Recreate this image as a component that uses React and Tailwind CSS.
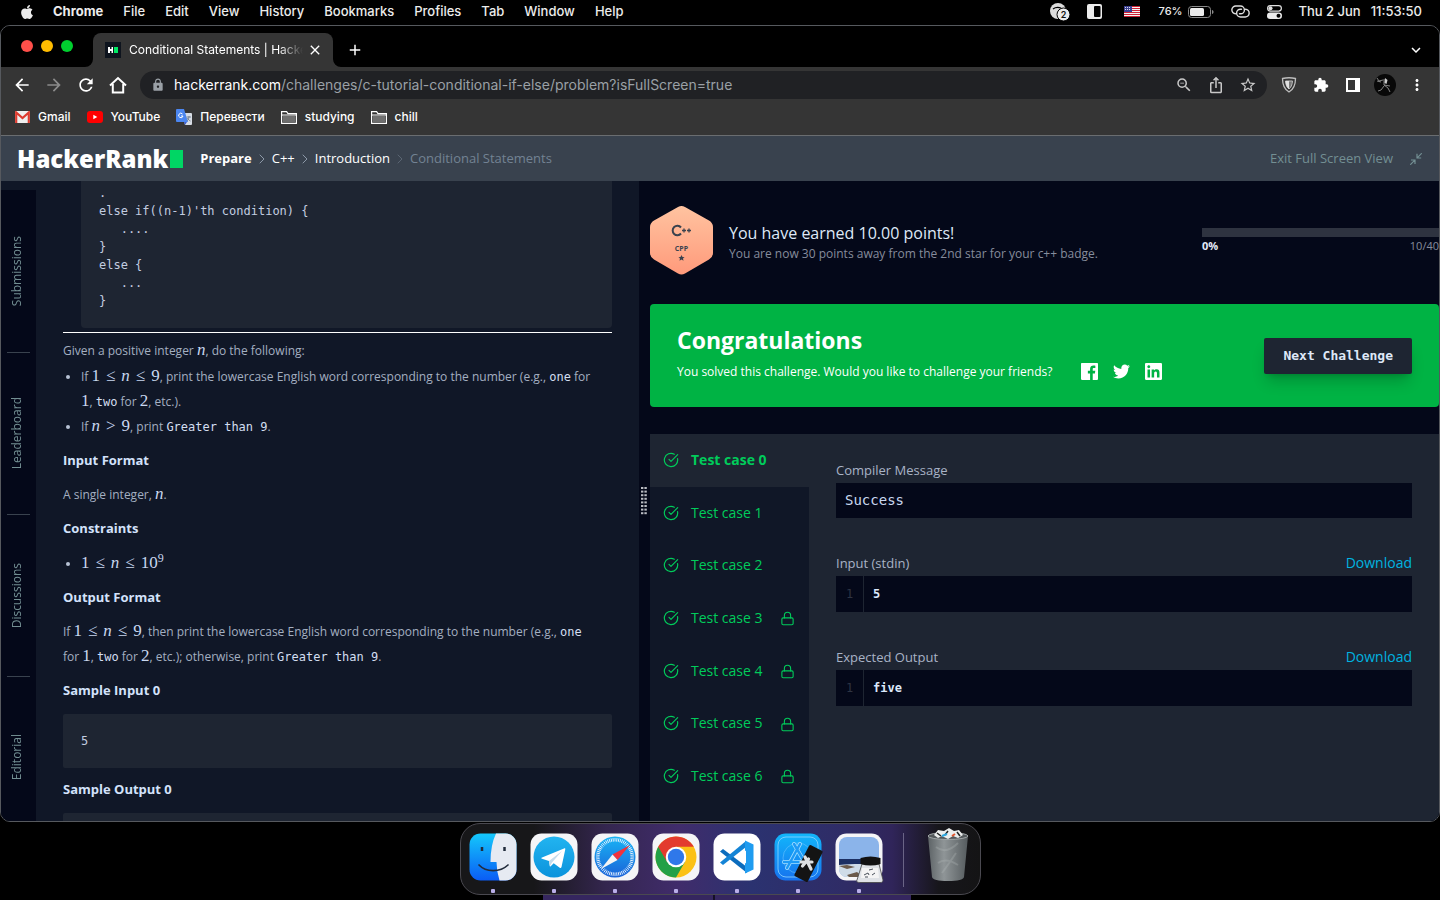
import React from "react";
import { FaApple, FaTwitter } from "react-icons/fa";
import {
  MdArrowBack, MdArrowForward, MdRefresh, MdLock, MdZoomOut, MdIosShare,
  MdStarBorder, MdExtension, MdMoreVert, MdExpandMore, MdAdd, MdClose,
} from "react-icons/md";
import { CircleCheckBig, Lock, ChevronRight } from "lucide-react";

const UI = "font-['Inter',sans-serif]";
const MONO = "font-['DejaVu_Sans_Mono',monospace]";
const MATH = "font-['Liberation_Serif',serif] text-[17px] leading-none text-[#c9d8f0]";

/* ---------- menu bar ---------- */

function MenuBar() {
  const items = ["File", "Edit", "View", "History", "Bookmarks", "Profiles", "Tab", "Window", "Help"];
  return (
    <header className={`${UI} flex h-[25px] shrink-0 items-center justify-between pr-[18px] pb-0.5 pl-[19px] text-[13px] font-medium text-[#ececec]`}>
      <nav className="flex items-center gap-5">
        <FaApple className="size-4" />
        <button className="-ml-0.5 font-bold">Chrome</button>
        {items.map((i) => <button key={i}>{i}</button>)}
      </nav>
      <div className="flex items-center">
        <svg className="mr-[17px] h-[18px] w-5" viewBox="0 0 20 18">
          <circle cx="8" cy="8" r="8" fill="#dcdcdc" />
          <path d="M3 6c2-1.500 5-2 8-1" stroke="#000" strokeWidth="1.200" fill="none" />
          <circle cx="13.500" cy="11.500" r="6.500" fill="#ececec" stroke="#000" />
          <text x="13.500" y="15" fontSize="9" textAnchor="middle" fill="#111" fontFamily="Inter" fontWeight="600">2</text>
        </svg>
        <svg className="mr-[22px] size-[15px]" viewBox="0 0 15 15">
          <rect width="15" height="15" rx="2" fill="#ececec" /><rect x="7" y="2" width="6.500" height="11" rx="1" fill="#000" />
        </svg>
        <svg className="mr-[19px] h-[11px] w-4" viewBox="0 0 16 11">
          <rect width="16" height="11" fill="#f4f4f4" />
          {[0, 2, 4, 6, 8, 10].map((y) => <rect key={y} y={y} width="16" height="1" fill="#d01f33" />)}
          <rect width="8" height="6" fill="#3b3f8f" />
          <path d="M1 1.500h6M1 3.500h6" stroke="#d6d8ee" strokeDasharray="1 1" />
        </svg>
        <span className="mr-[5px] text-[11px]">76%</span>
        <svg className="mr-[17px] h-3 w-[26px]" viewBox="0 0 26 12">
          <rect x=".5" y=".5" width="22" height="11" rx="3" fill="none" stroke="#8a8a8a" />
          <rect x="2" y="2" width="14" height="8" rx="1.500" fill="#ececec" />
          <path d="M24 4c2 .6 2 3.400 0 4z" fill="#8a8a8a" />
        </svg>
        <svg className="mr-[17px] h-[13px] w-[19px]" viewBox="0 0 19 13" fill="none" stroke="#dedede" strokeWidth="1.400" strokeLinecap="round">
          <path d="M4.500 8.800A3.900 3.900 0 0 1 5 1h4.500a3.900 3.900 0 0 1 0 7.800H8.500" />
          <path d="M14.500 4.200a3.900 3.900 0 0 1-.5 7.800H9.500a3.900 3.900 0 0 1 0-7.800h1" />
        </svg>
        <svg className="mr-[17px] h-[14px] w-[15px]" viewBox="0 0 15 14">
          <rect x=".6" y=".6" width="13.800" height="5.500" rx="2.750" fill="none" stroke="#dedede" strokeWidth="1.200" />
          <circle cx="3.500" cy="3.300" r="2" fill="#dedede" />
          <rect y="7.500" width="15" height="6.500" rx="3.200" fill="#ececec" /><circle cx="11.500" cy="10.750" r="2" fill="#000" />
        </svg>
        <span className="mr-2.5">Thu 2 Jun</span>
        <span>11:53:50</span>
      </div>
    </header>
  );
}

/* ---------- browser chrome ---------- */

function TabStrip() {
  return (
    <div className="flex h-[41px] shrink-0 items-end bg-black pr-[14px] pl-5 text-white">
      <div className="mr-[20px] mb-[15px] flex gap-2">
        <span className="size-3 rounded-full bg-[#ff4f4a]" />
        <span className="size-3 rounded-full bg-[#ffbc00]" />
        <span className="size-3 rounded-full bg-[#00d02f]" />
      </div>
      <div className="relative flex h-[34px] w-60 items-center rounded-t-lg bg-[#353535] pr-2.5 pl-3">
        <svg className="absolute bottom-0 -left-2 size-2" viewBox="0 0 8 8"><path d="M8 0v8H0a8 8 0 0 0 8-8" fill="#353535" /></svg>
        <svg className="absolute -right-2 bottom-0 size-2" viewBox="0 0 8 8"><path d="M0 0v8h8a8 8 0 0 1-8-8" fill="#353535" /></svg>
        <svg className="mr-2 size-4 shrink-0" viewBox="0 0 16 16">
          <rect width="16" height="16" fill="#0e141e" />
          <path d="M3 5h2v2h1.500V5H8v6H6.500V9H5v2H3z" fill="#fff" /><rect x="9" y="5" width="4" height="6" fill="#00ea64" />
        </svg>
        <span className={`${UI} min-w-0 flex-1 overflow-hidden text-xs whitespace-nowrap [mask-image:linear-gradient(to_right,#000_86%,transparent)]`}>
          Conditional Statements | HackerRank
        </span>
        <button aria-label="Close tab" className="ml-1"><MdClose className="size-4" /></button>
      </div>
      <button aria-label="New tab" className="mb-2 ml-[13px]"><MdAdd className="size-[18px]" /></button>
      <button aria-label="Search tabs" className="mb-2 ml-auto"><MdExpandMore className="size-[18px]" /></button>
    </div>
  );
}

function Toolbar() {
  return (
    <div className="flex h-9 shrink-0 items-center bg-[#353535] pr-3.5 pl-[11px] text-white">
      <button aria-label="Back" className="mr-3"><MdArrowBack className="size-5" /></button>
      <button aria-label="Forward" className="mr-3 text-[#8a8a8a]"><MdArrowForward className="size-5" /></button>
      <button aria-label="Reload" className="mr-3"><MdRefresh className="size-5" /></button>
      <button aria-label="Home" className="mr-3">
        <svg className="size-5" viewBox="0 0 20 20" fill="none" stroke="currentColor" strokeWidth="2"><path d="M2 10.500L10 3l8 7.500M4.800 9v8.500h10.400V9" /></svg>
      </button>
      <div className={`${UI} flex h-7 flex-1 items-center rounded-full bg-[#202124] pr-2.5 pl-[11px] text-sm`}>
        <MdLock className="mr-[9px] size-[14px] text-[#9aa0a6]" />
        <span className="flex-1 text-[#9aa0a6]"><span className="text-white">hackerrank.com</span>/challenges/c-tutorial-conditional-if-else/problem?isFullScreen=true</span>
        <span className="flex gap-3.5 text-[#c8c8c8]">
          <MdZoomOut className="size-[18px]" /><MdIosShare className="size-[18px]" /><MdStarBorder className="size-[18px]" />
        </span>
      </div>
      <div className="ml-3.5 flex items-center gap-4">
        <svg className="size-4" viewBox="0 0 15 16">
          <path d="M1 1.500C5 .600 10 .600 14 1.500c0 6-2 11-6.500 13.500C3 12.500 1 7.500 1 1.500z" fill="#353535" stroke="#bdbdbd" strokeWidth="1.300" />
          <path d="M4 4h7c-.3 4-1.500 6.500-3.500 8C5.500 10.500 4.200 8 4 4z" fill="#777" stroke="#bdbdbd" />
          <path d="M7.500 4v8C5.500 10.500 4.200 8 4 4z" fill="#e0e0e0" />
        </svg>
        <MdExtension className="size-4" />
        <svg className="size-4" viewBox="0 0 16 16"><path d="M1 1h14v14H1zM3 3v10h7V3z" fillRule="evenodd" fill="#fff" /></svg>
        <svg className="-mx-[3px] size-[22px]" viewBox="0 0 22 22">
          <circle cx="11" cy="11" r="11" fill="#080808" />
          <path d="M3 4l2 3 4-1M10 5v6l4 3 2 4M10 11l6 1M10 12l-3 4-3 1M3 7l4 1" stroke="#909090" strokeWidth=".9" fill="none" />
          <path d="M11 4l2.500 2-1 4-2-1z" fill="#ccc" />
        </svg>
        <MdMoreVert className="-mx-px size-[18px]" />
      </div>
    </div>
  );
}

function Folder() {
  return (
    <svg className="h-[13px] w-4" viewBox="0 0 16 13">
      <path d="M.600 12.400V.600h5l1.400 2h8.400v9.800z" fill="none" stroke="#fff" strokeWidth="1.200" />
      <path d="M2 5h12v6.500H2z" fill="#6f6f6f" /><path d="M.600 4h14.800" stroke="#fff" strokeWidth="1" />
    </svg>
  );
}

function Bookmarks() {
  const marks = [
    ["Gmail", <svg key="g" className="h-3 w-[15px]" viewBox="0 0 15 12"><rect width="15" height="12" rx="1" fill="#eee" /><path d="M1.200 12V1.500L7.500 7l6.300-5.500V12" fill="none" stroke="#dd3b2f" strokeWidth="2.200" /></svg>],
    ["YouTube", <svg key="y" className="h-3 w-4" viewBox="0 0 16 12"><rect width="16" height="12" rx="3" fill="#f00" /><path d="M6.300 3.800v4.400l4-2.200z" fill="#fff" /></svg>],
    ["Перевести", <svg key="t" className="size-4" viewBox="0 0 16 16"><path d="M6 4h9a1 1 0 0 1 1 1v10a1 1 0 0 1-1 1H9z" fill="#d8dde4" /><path d="M1 0h7l4 13H1a1 1 0 0 1-1-1V1a1 1 0 0 1 1-1z" fill="#4b86f0" /><path d="M8 13h3l-2 3z" fill="#3b5fd0" /><path d="M6.500 5A2.200 2.200 0 1 0 7 7H5" stroke="#fff" fill="none" /><path d="M10.500 8H15M13 7v1c-.3 2-1.300 3.300-2 4M11.500 9c.5 1.500 2 2.700 3 3" stroke="#6d7b8c" strokeWidth=".9" fill="none" /></svg>],
    ["studying", <Folder key="s" />],
    ["chill", <Folder key="c" />],
  ];
  return (
    <nav className={`${UI} flex h-[33px] shrink-0 items-start gap-4 border-b border-[#6a6d70] bg-[#353535] pt-[5px] pl-3.5 text-xs text-white`}>
      {marks.map(([label, icon]) => (
        <a key={label} href="#" className="flex h-[18px] items-center gap-2 font-medium">{icon}{label}</a>
      ))}
    </nav>
  );
}

/* ---------- page ---------- */

function PageHeader() {
  const sep = <ChevronRight className="size-4 text-[#8d99a8]" strokeWidth={1.5} />;
  return (
    <div className="flex h-[45px] shrink-0 items-center bg-[#39424e] pr-[17px] pl-4 text-[13px] text-white">
      <a href="#" className="mr-[17px] flex items-center text-2xl font-extrabold">HackerRank<span className="ml-0.5 h-[18px] w-[13px] bg-[#00d664]" /></a>
      <nav className="flex items-center gap-0.5">
        <a href="#" className="font-bold">Prepare</a>{sep}
        <a href="#">C++</a>{sep}
        <a href="#">Introduction</a><span className="opacity-40">{sep}</span>
        <span className="text-[#738293]">Conditional Statements</span>
      </nav>
      <button className="ml-auto flex items-center gap-[17px] text-[#738f93]">
        Exit Full Screen View
        <svg className="size-3" viewBox="0 0 12 12" fill="none" stroke="currentColor" strokeWidth="1.200">
          <path d="M11.800.2L7.200 4.800M7 .8V5h4.200M.2 11.800l4.600-4.600M1 7h4v4" />
        </svg>
      </button>
    </div>
  );
}

function SideTabs() {
  return (
    <nav className="mt-[9px] w-[35px] shrink-0 overflow-hidden bg-[#040819]">
      {["Submissions", "Leaderboard", "Discussions", "Editorial"].map((t, i) => (
        <div key={t} className="px-1.5">
          <button className={`flex h-[162px] w-full items-center justify-center pr-[3px] text-xs text-[#738f93] ${i ? "border-t border-[#39424e]" : ""}`}>
            <span className="rotate-180 [writing-mode:vertical-rl]">{t}</span>
          </button>
        </div>
      ))}
    </nav>
  );
}

const V = ({ children }) => <span className={`${MATH} italic`}>{children}</span>;
const N = ({ children }) => <span className={MATH}>{children}</span>;
const Op = ({ children }) => <span className={`${MATH} mx-1.5`}>{children}</span>;
const Code = ({ children }) => <code className={`${MONO} text-xs leading-none text-[#d3def0]`}>{children}</code>;
const Range = () => <span className="whitespace-nowrap"><N>1</N><Op>≤</Op><V>n</V><Op>≤</Op><N>9</N></span>;
const H = ({ children }) => <h3 className="mt-[9px] text-[13px] font-bold text-[#d3e2fb]">{children}</h3>;

function Li({ children }) {
  return (
    <li className="flex">
      <span className="mt-[11px] mr-[11px] ml-[3px] size-1 shrink-0 rounded-full bg-[#b7c2d4]" />
      <div>{children}</div>
    </li>
  );
}

const SNIPPET = `.
else if((n-1)'th condition) {
   ....
}
else {
   ...
}`;

function Problem() {
  return (
    <section className="min-w-0 flex-1 overflow-hidden pr-[27px] pl-[27px] text-xs leading-[25px] text-[#a4afc1]">
      <pre className={`${MONO} ml-[18px] rounded-b-sm bg-[#1e2532] pt-[3px] pb-[18px] pl-[18px] text-xs leading-[18px] text-[#c3cde0]`}>{SNIPPET}</pre>
      <hr className="mt-1 mb-[5px] border-0 border-t border-white" />
      <p>Given a positive integer <V>n</V>, do the following:</p>
      <ul className="mt-px">
        <Li>If <Range />, print the lowercase English word corresponding to the number (e.g., <Code>one</Code> for <span className="whitespace-nowrap"><N>1</N>, <Code>two</Code></span> for <N>2</N>, etc.).</Li>
        <Li>If <V>n</V><Op>&gt;</Op><N>9</N>, print <Code>Greater than 9</Code>.</Li>
      </ul>
      <H>Input Format</H>
      <p className="mt-[9px]">A single integer, <V>n</V>.</p>
      <H>Constraints</H>
      <ul className="mt-2.5">
        <Li><N>1</N><Op>≤</Op><V>n</V><Op>≤</Op><N>10<sup className="text-xs leading-none">9</sup></N></Li>
      </ul>
      <H>Output Format</H>
      <p className="mt-[9px]">If <Range />, then print the lowercase English word corresponding to the number (e.g., <Code>one</Code> <span className="whitespace-nowrap">for <N>1</N></span>, <Code>two</Code> for <N>2</N>, etc.); otherwise, print <Code>Greater than 9</Code>.</p>
      <H>Sample Input 0</H>
      <pre className={`${MONO} mt-[11px] rounded-xs bg-[#1e2532] p-[18px] text-xs leading-[18px] text-[#c3cde0]`}>5</pre>
      <H>Sample Output 0</H>
      <pre className={`${MONO} mt-[11px] h-[54px] rounded-xs bg-[#1e2532]`} />
    </section>
  );
}

function Grip() {
  return (
    <div className="flex w-[11px] shrink-0 items-center justify-start bg-[#040819] pl-0.5">
      <svg className="h-[28px] w-[6px]" viewBox="0 0 6 28">
        {[0, 1, 2, 3, 4, 5, 6, 7].map((r) => (
          <g key={r} fill="#b9bbc2"><rect y={r * 3.6} width="2.400" height="2" /><rect x="3.400" y={r * 3.6} width="2.400" height="2" /></g>
        ))}
      </svg>
    </div>
  );
}

function Badge() {
  return (
    <svg className="mr-[16px] h-[71px] w-[63px] shrink-0" viewBox="0 0 63 71">
      <defs><linearGradient id="badge" x1="0" y1="0" x2="0" y2="1"><stop stopColor="#ffc3a0" /><stop offset="1" stopColor="#ff9a7b" /></linearGradient></defs>
      <path d="M28 2q3.500-2 7 0l24 13.500q4 2.500 4 6.500v26q0 4-4 6.500L35 68.500q-3.500 2-7 0L4 54.500Q0 52 0 48V22q0-4 4-6.500z" fill="url(#badge)" />
      <path d="M31 22.500a4.700 4.700 0 1 0 0 6" stroke="#39424e" strokeWidth="2" fill="none" />
      <path d="M32 25.500h4M34 23.500v4M37 25.500h4M39 23.500v4" stroke="#39424e" strokeWidth="1.300" />
      <text x="31.500" y="46" fontSize="7" textAnchor="middle" fontWeight="700" fill="#39424e" fontFamily="Open Sans">CPP</text>
      <path d="M31.500 50l1 2 2.100.2-1.600 1.400.5 2.100-2-1.100-2 1.100.5-2.100-1.600-1.400 2.100-.2z" fill="#39424e" />
    </svg>
  );
}

const FB = "M22.676 0H1.324C.593 0 0 .593 0 1.324v21.352C0 23.408.593 24 1.324 24h11.494v-9.294H9.689v-3.621h3.129V8.410c0-3.099 1.894-4.785 4.659-4.785 1.325 0 2.464.097 2.796.141v3.240h-1.921c-1.500 0-1.792.721-1.792 1.771v2.311h3.584l-.465 3.630H16.560V24h6.115c.733 0 1.325-.592 1.325-1.324V1.324C24 .593 23.408 0 22.676 0";
const LI = "M20.447 20.452h-3.554v-5.569c0-1.328-.027-3.037-1.852-3.037-1.853 0-2.136 1.445-2.136 2.939v5.667H9.351V9h3.414v1.561h.046c.477-.9 1.637-1.850 3.370-1.850 3.601 0 4.267 2.370 4.267 5.455v6.286zM5.337 7.433c-1.144 0-2.063-.926-2.063-2.065 0-1.138.920-2.063 2.063-2.063 1.140 0 2.064.925 2.064 2.063 0 1.139-.925 2.065-2.064 2.065zm1.782 13.019H3.555V9h3.564v11.452zM22.225 0H1.771C.792 0 0 .774 0 1.729v20.542C0 23.227.792 24 1.771 24h20.451C23.200 24 24 23.227 24 22.271V1.729C24 .774 23.200 0 22.222 0h.003z";

function Results() {
  return (
    <section className="flex min-w-0 flex-1 flex-col overflow-hidden bg-[#040819]">
      <div className="flex shrink-0 items-start pt-6">
        <Badge />
        <div className="flex-1 pt-4">
          <p className="text-base leading-6 text-[#dfe8f7]">You have earned 10.00 points!</p>
          <p className="text-xs leading-[18px] text-[#868c9c]">You are now 30 points away from the 2nd star for your c++ badge.</p>
        </div>
        <div className="w-[237px] pt-[23px] text-[11px] leading-[18px]">
          <div className="h-[9px] bg-[#2e3340]" />
          <div className="flex justify-between"><span className="font-bold text-[#e3ebf8]">0%</span><span className="text-[#868c9c]">10/40</span></div>
        </div>
      </div>
      <div className="mt-7 flex h-[103px] shrink-0 items-center justify-between rounded-[4px] bg-[#00b344] px-[27px] text-white">
        <div>
          <h2 className="text-[23px] leading-8 font-bold">Congratulations</h2>
          <div className="flex items-center gap-[15px] text-xs leading-8">
            <span className="mr-3.5">You solved this challenge. Would you like to challenge your friends?</span>
            <a href="#" aria-label="Facebook"><svg className="size-[17px]" viewBox="0 0 24 24" fill="#fff"><path d={FB} /></svg></a>
            <a href="#" aria-label="Twitter"><FaTwitter className="size-[17px]" /></a>
            <a href="#" aria-label="LinkedIn"><svg className="size-[17px]" viewBox="0 0 24 24" fill="#fff"><path d={LI} /></svg></a>
          </div>
        </div>
        <button className={`${MONO} h-9 rounded-xs bg-[#1e2532] px-[19px] text-[13px] font-bold text-[#dfe8f7] shadow-lg shadow-black/20`}>Next Challenge</button>
      </div>
      <div className="mt-[27px] flex min-h-0 flex-1">
        <div className="w-[159px] shrink-0 overflow-hidden bg-[#101727]">
          <div className="grid h-[368px] grid-rows-7">
            {[0, 1, 2, 3, 4, 5, 6].map((i) => (
              <button key={i} className={`flex items-center pr-3.5 pl-[13px] text-left text-sm text-[#00cc5b] ${i ? "" : "bg-[#1e2532] font-bold"}`}>
                <CircleCheckBig className="mr-3 size-4 shrink-0" strokeWidth={1.75} />
                <span className="flex-1 whitespace-nowrap">Test case {i}</span>
                {i > 2 && <Lock className="mt-0.5 size-[15px]" strokeWidth={1.75} />}
              </button>
            ))}
          </div>
        </div>
        <div className="min-w-0 flex-1 bg-[#1e2532] px-[27px] pt-[26px] text-[13px] text-[#a9b3c6]">
          <p className="mb-[3px] leading-5">Compiler Message</p>
          <div className={`${MONO} h-[35px] bg-[#040819] pl-[9px] text-sm leading-[35px] text-[#c9d8f0]`}>Success</div>
          {[["Input (stdin)", "5"], ["Expected Output", "five"]].map(([label, v]) => (
            <div key={label} className="mt-[35px]">
              <div className="mb-[3px] flex justify-between leading-5">{label}<a href="#" className="text-sm leading-5 text-[#00b4e0]">Download</a></div>
              <div className={`${MONO} flex h-9 bg-[#040819] text-xs leading-9`}>
                <span className="w-7 border-r border-[#1e2532] text-center text-[#2e3443]">1</span>
                <span className="pl-[9px] font-bold text-[#dce8fb]">{v}</span>
              </div>
            </div>
          ))}
        </div>
      </div>
    </section>
  );
}

/* ---------- dock ---------- */

const Tile = ({ children, fill = "#f5f5f7" }) => (
  <svg className="size-12 overflow-visible" viewBox="0 0 48 48"><rect x=".5" y=".5" width="47" height="47" rx="11" fill={fill} />{children}</svg>
);

function Dock() {
  const ticks = Array.from({ length: 60 }, (_, i) => i * 6);
  const icons = [
    <Tile key="finder" fill="url(#fi)">
      <path d="M27 .5h9.500a11 11 0 0 1 11 11v25a11 11 0 0 1-11 11H30.500Q27.500 38 27.500 29H21.500Q21.500 12 27 .5z" fill="#e6eaf2" />
      <path d="M13 14v4M35.500 14v4" stroke="#222c3c" strokeWidth="2.500" />
      <path d="M10 32c7 7.500 21 7.500 29 0" stroke="#222c3c" strokeWidth="1.700" fill="none" strokeLinecap="round" />
    </Tile>,
    <Tile key="telegram">
      <circle cx="24" cy="24" r="20.500" fill="url(#tg)" />
      <path d="M12 24.500l22-9c1-.4 1.500.2 1.200 1.200L31.500 34c-.3 1-1 1.300-1.800.7l-6-4.500-3 3c-.6.500-1 .3-1-.5L19 28l-7-2.200c-.9-.3-.9-.9 0-1.300z" fill="#fff" />
      <path d="M19 28l13-10-10 11.500-2 3.500z" fill="#c5dcec" />
    </Tile>,
    <Tile key="safari">
      <circle cx="24" cy="24" r="20.500" fill="url(#sf)" />
      {ticks.map((a) => <path key={a} d="M24 5v3.500" stroke="#e8f3ff" strokeWidth=".9" transform={`rotate(${a} 24 24)`} />)}
      <path d="M39 12L26.500 27 21.500 21.500z" fill="#f0323c" /><path d="M10 36l11.500-14.500 5 5.500z" fill="#f4f4f4" />
    </Tile>,
    <Tile key="chrome">
      <g transform="translate(24 24)">
        <circle r="20.500" fill="#fbc116" />
        <path d="M-17.750-10.250A20.500 20.500 0 0 0 0 20.500L8.900 5.100 0 0z" fill="#23a047" />
        <path d="M-17.750-10.250L-8.900 5.100 0 0 0-10.250h17.750A20.500 20.500 0 0 0-17.750-10.250z" fill="#e33b2e" />
        <circle r="10.250" fill="#fff" /><circle r="8.200" fill="#2f78ea" />
      </g>
    </Tile>,
    <Tile key="vscode" fill="#fff">
      <path d="M7 18.500l3-2.500 24 18v6z" fill="#0b6cbd" /><path d="M7 29.500l3 2.500 23-18V8z" fill="#1484d6" />
      <path d="M32 7.500l8.500 4V36.500l-8.500 4z" fill="#1f9cf0" /><path d="M33 17.500L23.500 24l9.500 6.500z" fill="#fff" />
    </Tile>,
    <Tile key="appstore" fill="url(#as)">
      <rect x="4" y="4" width="40" height="40" rx="8" fill="none" stroke="#8fd5ff" strokeWidth=".8" />
      <circle cx="24" cy="25" r="15" fill="none" stroke="#7ccbff" strokeWidth=".7" opacity=".7" />
      <g stroke="#a5deff" strokeWidth="4" strokeLinecap="round"><path d="M26 11L13 35M20 11l14 24M10 29h26" /></g>
      <g stroke="#1e9af5" strokeWidth="2.500" strokeLinecap="round"><path d="M26 11L13 35M20 11l14 24M10 29h26" /></g>
      <rect x="27" y="13" width="15" height="35" rx="1.500" fill="#141414" transform="rotate(27 34.500 30.500)" />
      <path d="M31 24l6 12M27 29h11M34.500 26l-6 7" stroke="#dfe1e3" strokeWidth="3.200" strokeLinecap="round" />
    </Tile>,
    <Tile key="preview">
      <rect x="4" y="4" width="40" height="40" rx="8" fill="#8bb4ea" />
      <path d="M4 26h40v12a6 6 0 0 1-6 6H12a8 8 0 0 1-8-8z" fill="#cfdce8" /><path d="M4 26h40v4c-12 2-26 0-40 2z" fill="#1c2f63" />
      <path d="M4 33l8-1 8 2-8 2zM12 42l10-3 6 5H14z" fill="#6b5a4a" />
      <path d="M27 31h17l4 16c0 2-1 2.500-3 2.500H25c-2 0-4-.5-3-2.500z" fill="#dfe2e6" stroke="#444" strokeWidth=".8" />
      <path d="M25.500 25q10-3 20 0v6q-10 3-20 0z" fill="#121212" /><path d="M27 35h16l1 10H26z" fill="#f4f4f4" /><path d="M34 37l4-1M29 42l4-2 1 2M37 42l3-2M30 44h3" stroke="#49505a" fill="none" />
    </Tile>,
  ];
  return (
    <footer className="flex shrink-0 flex-col items-center pt-px">
      <svg className="absolute size-0" aria-hidden="true">
        <defs>
          <linearGradient id="fi" x1="0" y1="0" x2="0" y2="1"><stop stopColor="#14c8fb" /><stop offset="1" stopColor="#0a5cf5" /></linearGradient>
          <linearGradient id="tg" x1="0" y1="0" x2="0" y2="1"><stop stopColor="#22b4f0" /><stop offset="1" stopColor="#0b93dc" /></linearGradient>
          <linearGradient id="sf" x1="0" y1="0" x2="0" y2="1"><stop stopColor="#19b4f5" /><stop offset="1" stopColor="#1a62d8" /></linearGradient>
          <linearGradient id="as" x1="0" y1="0" x2="0" y2="1"><stop stopColor="#12b6fb" /><stop offset="1" stopColor="#1672ee" /></linearGradient>
          <linearGradient id="tr"><stop stopColor="#5d6366" /><stop offset=".4" stopColor="#8f9597" /><stop offset="1" stopColor="#555b5e" /></linearGradient>
        </defs>
      </svg>
      <div className="flex h-[72px] items-start gap-[13px] rounded-[20px] border border-[#4a4950] bg-[linear-gradient(90deg,#171719_0%,#171719_14%,#34264f_28%,#402c6b_42%,#2b3270_56%,#2f2c66_74%,#30255a_83%,#17161b_92%,#141415_100%)] px-2 pt-[9px]">
        {icons.map((icon) => (
          <div key={icon.key} className="flex flex-col items-center gap-2">{icon}<span className="size-1 rounded-[1px] bg-[#b9aee8]" /></div>
        ))}
        <span className="mx-[7px] h-[54px] w-px bg-[#6a6486]" />
        <svg className="mt-[-6px] h-[56px] w-12" viewBox="0 0 48 56">
          <path d="M4 9l4 41q1 4 16 4t16-4l4-41q-20 6-40 0z" fill="url(#tr)" />
          <path d="M12 20q10 8 22-4M14 36q8-6 20 2M18 46q6-8 14-20" stroke="#b3b8ba" strokeWidth="2" fill="none" opacity=".3" />
          <ellipse cx="24" cy="9" rx="20" ry="3.500" fill="#54595c" stroke="#a0a5a7" />
          <path d="M10 8l4-5 6 1 5-3 5 3 5-1 4 5-5 3-5-2-5 3-6-3-4 2z" fill="#eceeee" />
          <path d="M13 6l4 3M33 5l3 4M24 4l-3 4" stroke="#222" strokeWidth="1.500" /><path d="M18 9l5-2" stroke="#2ea8e0" strokeWidth="2" /><path d="M28 9l3-2" stroke="#e0552e" strokeWidth="2" />
        </svg>
      </div>
      <div className="ml-3.5 flex h-[5px] w-[368px] bg-[#35265f]"><span className="ml-[170px] w-0.5 bg-[#151026]" /></div>
    </footer>
  );
}

export default function App() {
  return (
    <div className="flex h-screen flex-col overflow-hidden bg-black font-['Open_Sans',sans-serif]">
      <MenuBar />
      <main className="flex min-h-0 flex-1 flex-col overflow-hidden rounded-[10px] border border-[#56595e]">
        <TabStrip />
        <Toolbar />
        <Bookmarks />
        <PageHeader />
        <div className="flex min-h-0 flex-1 bg-[#101727]">
          <div className="flex w-[638px] shrink-0">
            <SideTabs />
            <Problem />
          </div>
          <Grip />
          <Results />
        </div>
      </main>
      <Dock />
    </div>
  );
}
